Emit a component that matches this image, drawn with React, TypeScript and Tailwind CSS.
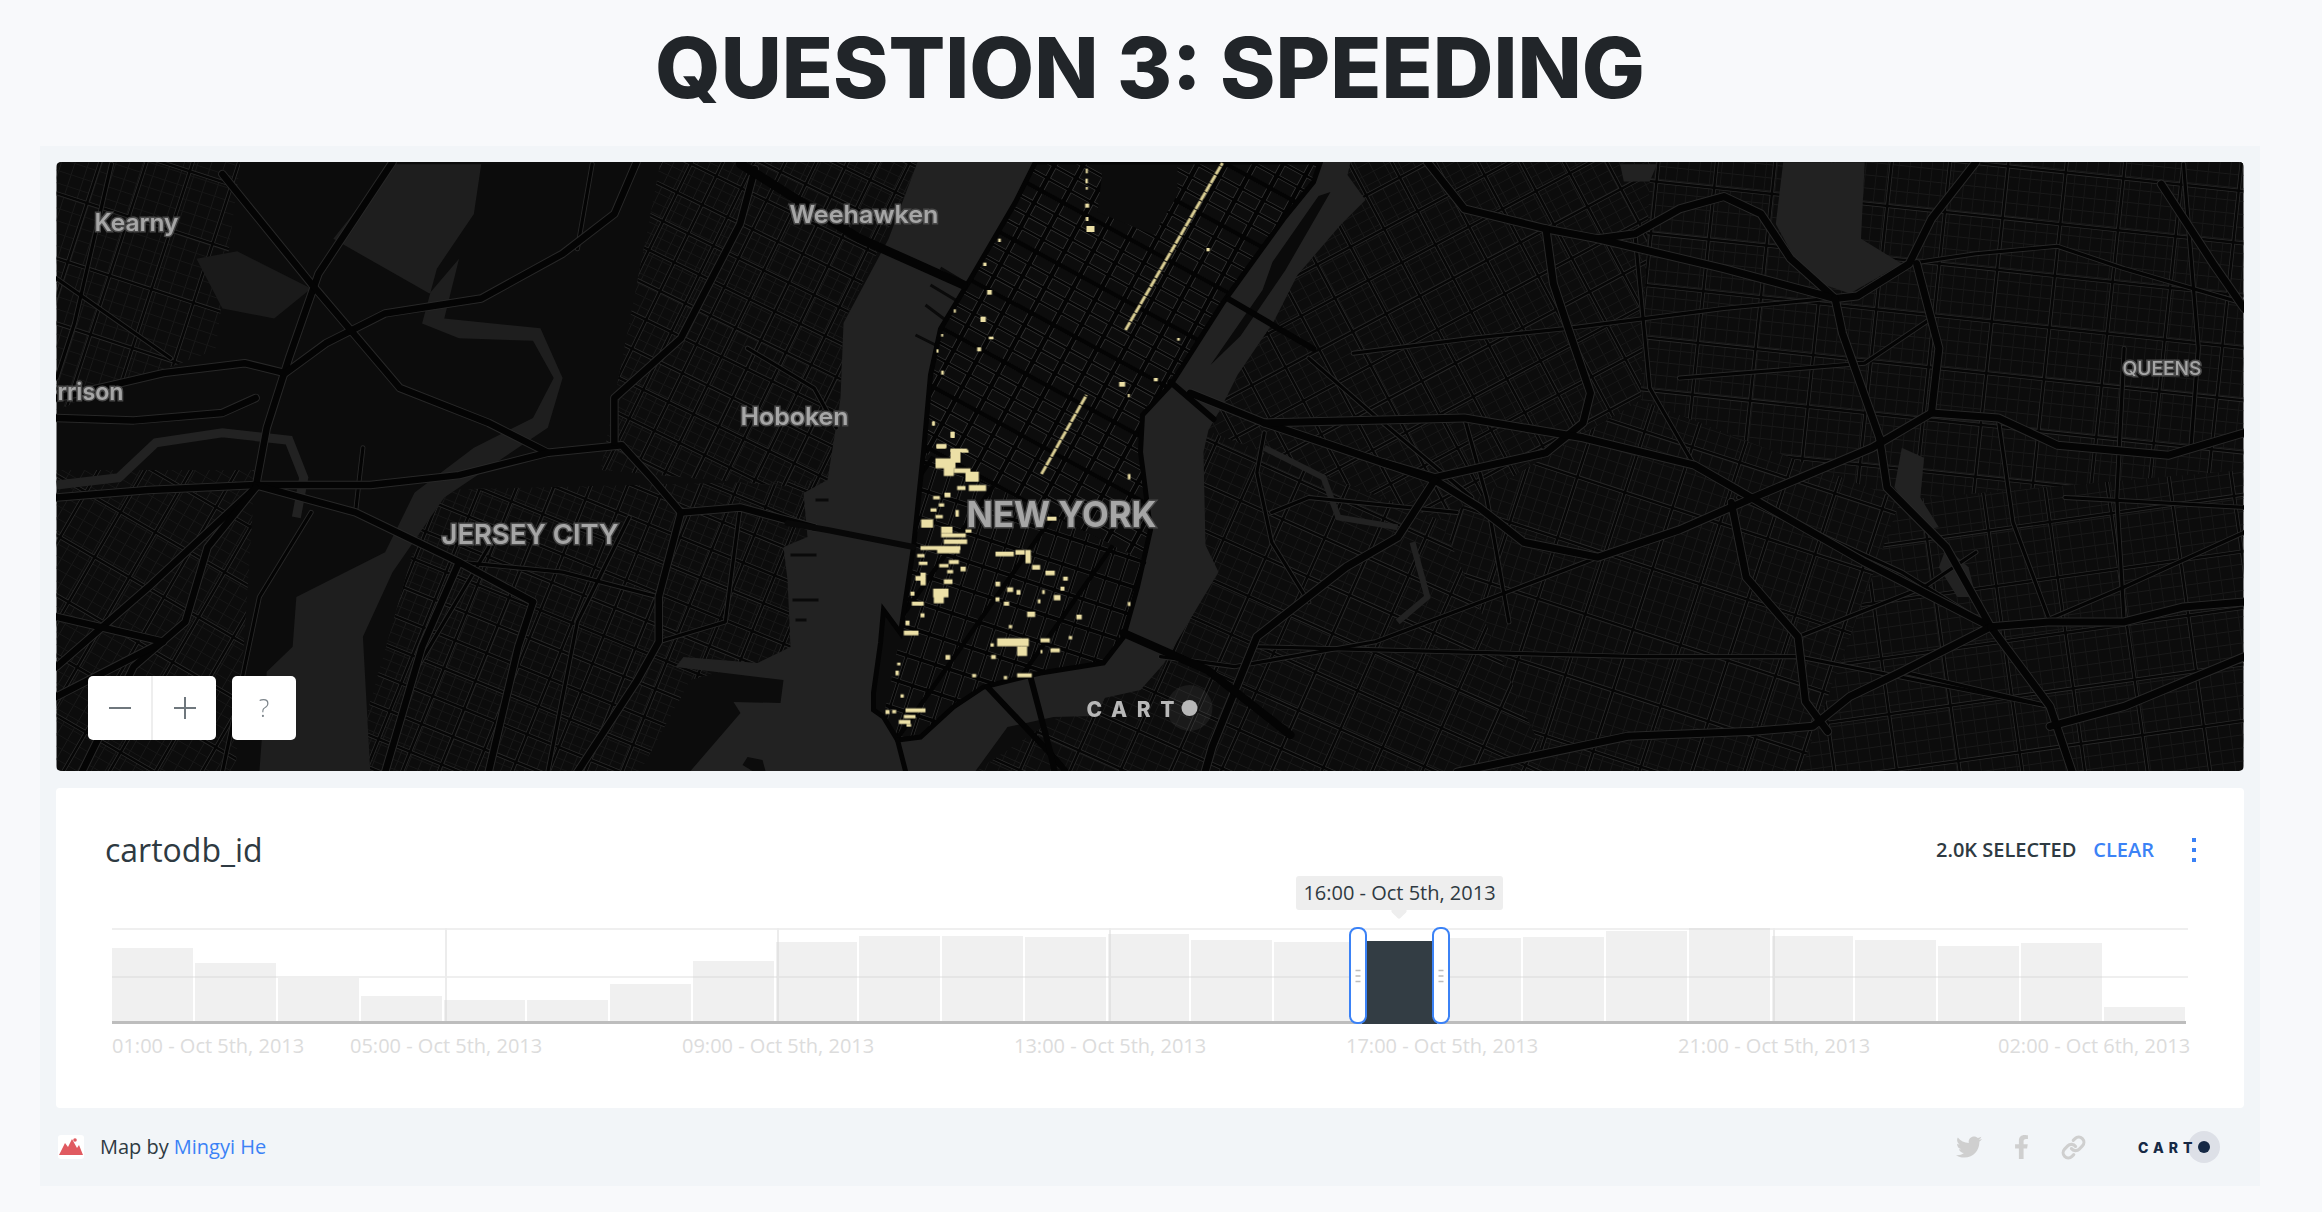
import { FaTwitter, FaFacebookF } from "react-icons/fa";
import { FiLink } from "react-icons/fi";

// rough trace of the basemap, coordinates are page pixels unless inside a z1/z2 group
const Z1 = "matrix(0.7396 0 0 0.4975 0 0)";
const Z2 = "matrix(0.7413 0 0 0.4975 1160 0)";

const MANHATTAN_EDGE =
  "1320,162 1313,182 1283,219 1223,302 1170,385 1142,415 1140,452 1142,467 1150,530 1137,587 1123,637 1103,663 1040,673 983,687 953,707 920,737 897,740 883,717 873,710 873,693 880,643 883,610 900,633 913,547 920,480 923,452 930,375 940,329 970,279 1015,202 1035,162";

const WATER = `917,162 888,239 843,323 840,398 827,480 803,493 807,537 783,547 787,580 790,647 757,663 683,657 675,667 783,680 780,703 733,702 740,713 690,771 975,771 1007,727 1053,717 1095,716 1104,698 1140,690 1163,664 1218,572 1205,545 1203,452 1208,430 1220,409 1237,375 1273,322 1297,275 1340,225 1365,200 1347,175 1350,162 ${MANHATTAN_EDGE}`;

const MIDTOWN_CLIP = "1320,162 1313,182 1283,219 1223,302 1170,385 1142,415 1140,452 1142,467 1150,530 1146,562 923,452 930,375 940,329 970,279 1015,202 1035,162";
const DOWNTOWN_CLIP = "923,452 1146,562 1137,587 1123,637 1103,663 1040,673 983,687 953,707 920,737 897,740 883,717 900,633 913,547 920,480";

type Zone = { clip: string; a: number; sa: number; b: number; sb: number; ma: number; mb: number };

const ZONES: Zone[] = [
  { clip: "56,162 240,162 215,350 56,410", a: 72, sa: 13, b: -18, sb: 12, ma: 44, mb: 62 },
  { clip: "56,470 255,470 235,771 56,771", a: 60, sa: 12, b: -30, sb: 11, ma: 40, mb: 52 },
  { clip: "430,490 830,480 800,650 690,680 640,771 350,771", a: 68, sa: 11, b: -22, sb: 9, ma: 34, mb: 30 },
  { clip: "660,162 920,162 843,323 840,398 827,490 600,470", a: 64, sa: 11, b: -26, sb: 10, ma: 28, mb: 32 },
  { clip: "1320,162 1650,162 1640,400 1440,520 1205,430", a: -62, sa: 13, b: 28, sb: 10, ma: 38, mb: 38 },
  { clip: "1650,162 2243,162 2243,470 1900,500 1640,400", a: -6, sa: 13, b: 84, sb: 11, ma: 52, mb: 58 },
  { clip: "1205,430 1440,520 1550,771 975,771 1160,650", a: -24, sa: 11, b: 66, sb: 12, ma: 42, mb: 46 },
  { clip: "1440,520 1640,400 1900,500 1800,771 1550,771", a: 72, sa: 11, b: -18, sb: 12, ma: 50, mb: 64 },
  { clip: "1900,500 2243,470 2243,771 1800,771", a: 8, sa: 13, b: 98, sb: 12, ma: 56, mb: 62 },
];

const HIGHWAYS_Z1 = [
  "M530,326 L430,550 L390,720 L360,860 L345,980 L200,1180 L76,1340",
  "M860,326 L830,430 L760,510 L650,600 L520,630 L440,690 L385,750 L330,730 L220,750 L76,800",
  "M300,350 L420,570 L540,780 L660,850 L740,910",
  "M76,1000 L200,985 L345,975 L500,975 L620,955 L740,910 L840,895 L880,960 L920,1030 L1000,1020 L1100,1060",
  "M345,975 L480,1030 L620,1130 L720,1210",
  "M1020,340 L1000,450 L920,680 L830,800 L830,890",
  "M920,1030 L890,1200 L890,1290 L860,1370 L780,1552",
  "M345,980 L280,1100 L250,1250 L180,1340 L110,1552",
  "M76,840 L180,845 L300,830 L345,800",
  "M660,1552 L700,1300 L720,1210",
  "M520,1552 L570,1300 L620,1130",
  "M76,1240 L220,1290 L76,1400",
];

const HIGHWAYS_Z2 = [
  "M360,326 L410,420 L520,460 L590,480 L640,470 L700,420 L760,395 L810,430 L850,520 L910,600 L940,595 L1010,530 L1040,440 L1100,326",
  "M590,480 L760,540 L910,600",
  "M520,460 L530,570 L550,660 L580,790 L570,850 L520,910 L370,960 L300,930 L140,850 L40,790",
  "M140,850 L410,840 L570,880 L720,935 L820,1020 L950,1130 L1120,1260 L1200,1420 L1230,1552",
  "M300,930 L370,965 L430,1020 L490,1090 L590,1120 L700,1065 L800,1000 L960,900 L1040,830 L1050,700 L1020,530",
  "M1040,830 L1130,840 L1210,895 L1360,915 L1462,870",
  "M970,880 L920,670 L910,600",
  "M970,880 L980,980 L1060,1100 L1120,1260",
  "M370,965 L320,1080 L250,1140 L130,1280 L70,1500 L60,1552",
  "M770,1010 L790,1160 L860,1280 L870,1410 L900,1470",
  "M1120,1260 L1000,1350 L930,1400 L880,1460 L800,1470 L630,1480 L400,1552",
  "M1120,1260 L1200,1250 L1300,1250 L1380,1220 L1462,1210",
  "M1200,1460 L1300,1420 L1462,1320",
  "M1350,370 L1420,530 L1462,620",
];

const ROADS_Z2 = [
  "M140,870 L130,950 L150,1090 L200,1210",
  "M590,1120 L450,1200 L290,1290 L100,1340 L0,1320",
  "M260,710 L420,680 L550,660 L760,620 L900,600",
  "M1010,530 L1100,510 L1210,495 L1300,540 L1462,610",
  "M1190,1250 L1300,1180 L1462,1070",
  "M1130,840 L1150,1050 L1200,1250",
  "M1300,700 L1290,1000 L1300,1250",
  "M640,470 L660,780 L720,935",
  "M780,1000 L1000,1150 L1120,1260",
  "M130,1300 L650,1320 L860,1320 L1200,1420",
  "M860,1280 L1030,1180 L1100,1110",
  "M400,1030 L200,1000 L150,1030",
  "M410,840 L440,1000 L470,1250",
  "M1000,1350 L1200,1420",
  "M700,760 L950,730 L1040,640",
  "M200,720 L300,850 L420,1000",
  "M1220,1000 L1462,1020",
  "M1380,330 L1400,700 L1390,900",
];

const ROADS_Z1 = [
  "M300,1552 L350,1200 L420,1030",
  "M1000,1020 L980,1250 L890,1290",
  "M620,1130 L760,1150 L890,1200",
  "M490,900 L480,1030",
  "M150,330 L100,650 L76,760",
  "M76,560 L230,720",
  "M800,330 L780,500",
  "M1010,700 L1100,780 L1130,860",
  "M850,1040 L780,1250 L740,1552",
  "M660,1100 L560,1350 L520,1552",
];

// yellow blocks, coordinates in a 3x crop anchored at (840,400)
const BLOCKS = [
  [288,132,30,12],[285,175,60,30],[330,148,30,40],[362,150,22,8],[310,200,30,28],[340,205,50,14],[375,215,40,30],[385,255,52,18],[350,258,25,12],[278,288,20,10],
  [312,278,18,14],[270,325,18,10],[295,310,16,10],[285,345,22,10],[345,330,10,20],[242,358,36,25],[302,380,34,20],[302,400,74,12],[310,418,70,14],[375,388,18,10],
  [240,438,120,12],[290,446,68,14],[230,462,22,10],[235,485,26,10],[296,492,28,10],[325,480,30,12],[360,500,16,14],[320,510,18,10],[225,528,30,14],[240,518,16,38],
  [310,538,26,14],[278,566,46,26],[280,590,30,20],[210,575,12,12],[214,605,36,12],[240,640,12,12],[195,662,12,14],[190,692,44,14],[165,812,10,14],[170,788,10,8],
  [135,930,12,12],[155,930,12,10],[195,925,60,12],[190,945,35,10],[175,960,35,12],[198,972,14,8],[180,883,10,10],[275,65,8,12],[330,95,12,18],[620,350,28,12],
  [465,455,55,14],[525,450,28,14],[555,450,16,40],[575,495,24,14],[615,512,28,14],[668,530,14,12],[465,545,14,14],[500,562,18,14],[528,570,12,14],[660,560,12,12],
  [605,570,8,12],[640,585,20,16],[465,592,12,12],[490,605,16,12],[592,598,8,12],[560,635,24,16],[708,644,16,14],[505,675,10,10],[470,715,95,24],[530,740,30,28],
  [600,715,28,12],[685,708,10,10],[450,730,10,10],[452,765,14,12],[315,765,14,14],[630,745,28,12],[600,750,6,10],[395,822,12,10],[490,828,10,10],[530,820,44,12],
  [862,222,8,16],[862,606,8,12],
];

// midtown dots, coordinates in a 3x crop anchored at (920,162)
const DOTS = [
  [496,20,6,14],[495,50,7,14],[496,75,6,8],[494,125,12,12],[496,165,8,12],[498,192,24,18],[233,230,8,10],[188,302,10,10],[200,384,14,14],[180,464,16,16],
  [205,524,14,8],[170,556,12,12],[100,442,6,10],[62,516,6,8],[48,562,6,10],[62,626,8,12],[770,528,8,8],[858,258,10,10],[596,660,18,14],[700,648,12,10],[622,696,6,10],[36,778,6,12],[92,810,10,18],[48,848,28,12],[90,860,50,10],
];

const BAR_TOPS = [948,963,978,996,1000,1000,984,961,942,936,936,937,934,940,942,941,938,937,931,928,936,940,946,943,1007];
const TICKS = [446,778,1110,1442,1774];

function grid(cx: number, cy: number, angle: number, spacing: number, extent = 1700) {
  const r = (angle * Math.PI) / 180;
  const dx = Math.cos(r);
  const dy = -Math.sin(r);
  let d = "";
  for (let t = -extent; t <= extent; t += spacing) {
    const x = cx - dy * t;
    const y = cy + dx * t;
    d += `M${(x - dx * extent).toFixed(1)},${(y - dy * extent).toFixed(1)}L${(x + dx * extent).toFixed(1)},${(y + dy * extent).toFixed(1)}`;
  }
  return d;
}

function Label(props: { x: number; y: number; w: number; size: number; text: string; weight?: number }) {
  return (
    <text
      x={props.x}
      y={props.y}
      fontSize={props.size}
      fontWeight={props.weight ?? 600}
      textLength={props.w}
      lengthAdjust="spacingAndGlyphs"
      fill="#a6a6a6"
      stroke="#484848"
      strokeWidth={3}
      className="font-['Inter',sans-serif] [paint-order:stroke]"
    >
      {props.text}
    </text>
  );
}

function CasedRoads({ paths, width, casing }: { paths: string[]; width: number; casing: number }) {
  return (
    <>
      {paths.map((d) => (
        <path key={d} d={d} stroke="#282828" strokeWidth={casing} vectorEffect="non-scaling-stroke" />
      ))}
      {paths.map((d) => (
        <path key={d} d={d} stroke="#040404" strokeWidth={width} vectorEffect="non-scaling-stroke" />
      ))}
    </>
  );
}

function MapDrawing() {
  return (
    <svg viewBox="56 162 2187 609" className="block h-full w-full">
      <defs>
        {ZONES.map((z, i) => (
          <clipPath key={i} id={`zone-${i}`}>
            <polygon points={z.clip} />
          </clipPath>
        ))}
        <clipPath id="midtown">
          <polygon points={MIDTOWN_CLIP} />
        </clipPath>
        <clipPath id="downtown">
          <polygon points={DOWNTOWN_CLIP} />
        </clipPath>
      </defs>

      <rect x="56" y="162" width="2187" height="609" fill="#0c0c0c" />

      {ZONES.map((z, i) => (
        <g key={i} clipPath={`url(#zone-${i})`} fill="none">
          <path d={grid(1000, 460, z.a, z.sa)} stroke="#1a1a1a" strokeWidth="1" />
          <path d={grid(1000, 460, z.b, z.sb)} stroke="#171717" strokeWidth="1" />
          <path d={grid(1003, 463, z.a, z.ma)} stroke="#292929" strokeWidth="4" />
          <path d={grid(1003, 463, z.b, z.mb)} stroke="#292929" strokeWidth="4" />
          <path d={grid(1003, 463, z.a, z.ma)} stroke="#060606" strokeWidth="2.4" />
          <path d={grid(1003, 463, z.b, z.mb)} stroke="#060606" strokeWidth="2.4" />
        </g>
      ))}

      {/* meadowlands and newark bay */}
      <g transform={Z1}>
        <path d="M530,330 L650,330 L640,430 L590,540 L570,650 L620,680 L720,685 L748,760 L720,840 L640,900 L560,990 L540,1050 L520,1110 L400,1200 L395,1300 L360,1350 L350,1552 L500,1552 L490,1280 L530,1150 L600,1000 L740,860 L760,760 L730,660 L600,640 L620,520 L580,590 L450,480 Z" fill="#1e1e1e" />
        <path d="M265,520 L320,505 L420,580 L370,640 L300,620 Z" fill="#1a1a1a" />
        <path d="M76,975 L160,960 L210,890 L300,870 L390,885 L410,960 L400,1040" stroke="#222222" strokeWidth="9" fill="none" vectorEffect="non-scaling-stroke" />
      </g>

      <g transform={Z2}>
        <path d="M840,326 L950,326 L945,480 L1000,530 L930,590 L870,560 L830,450 Z" fill="#222222" />
        <path d="M620,330 L670,330 L660,365 L625,365 Z" fill="#222222" />
        <path d="M1000,900 L1030,920 L1025,1000 L1050,1060 L1030,1065 L990,980 Z" fill="#222222" />
        <path d="M1060,1100 L1090,1140 L1100,1200 L1075,1200 L1050,1140 Z" fill="#222222" />
        <path d="M140,900 L220,960 L240,1040 L320,1060 M340,1090 L360,1200 L320,1250" stroke="#222222" strokeWidth="6" fill="none" vectorEffect="non-scaling-stroke" />
      </g>

      <polygon points={WATER} fill="#222222" />

      {/* piers and roosevelt island */}
      <path d="M1330,192 L1318,196 L1272,262 L1262,290 L1210,365 L1240,336 L1285,270 Z" fill="#0a0a0a" />
      <polygon points="747,757 742,765 752,771 765,771 762,760" fill="#0c0c0c" />
      <path d="M828,500 H815 M816,555 H790 M818,600 H792 M806,620 H795" stroke="#0a0a0a" strokeWidth="3" fill="none" />
      <path d="M965,283 L940,268 M955,300 L930,285 M945,320 L925,305 M935,345 L915,335" stroke="#0a0a0a" strokeWidth="3" fill="none" />

      {/* manhattan */}
      <polygon points={MANHATTAN_EDGE} fill="#0c0c0c" />
      <g clipPath="url(#midtown)" fill="none">
        <path d={grid(1040, 400, -28.6, 14, 800)} stroke="#343434" strokeWidth="3.8" />
        <path d={grid(1040, 400, 61.4, 25, 800)} stroke="#343434" strokeWidth="6" />
        <path d={grid(1040, 400, -28.6, 14, 800)} stroke="#040404" strokeWidth="2.4" />
        <path d={grid(1040, 400, 61.4, 25, 800)} stroke="#040404" strokeWidth="4.4" />
        <path d={grid(1040, 400, -28.6, 56, 800)} stroke="#040404" strokeWidth="4.4" />
      </g>
      <g clipPath="url(#downtown)" fill="none">
        <path d={grid(1040, 600, 72, 15, 500)} stroke="#2e2e2e" strokeWidth="3.4" />
        <path d={grid(1040, 600, -18, 27, 500)} stroke="#2e2e2e" strokeWidth="5" />
        <path d={grid(1040, 600, 72, 15, 500)} stroke="#040404" strokeWidth="2" />
        <path d={grid(1040, 600, -18, 27, 500)} stroke="#040404" strokeWidth="3.6" />
        <path d={grid(1040, 600, 55, 66, 500)} stroke="#040404" strokeWidth="4.4" />
      </g>
      <polygon points="1103,162 1177,162 1177,195 1153,235 1097,212" fill="#0c0c0c" />
      <polygon points={MANHATTAN_EDGE} stroke="#040404" strokeWidth="5" fill="none" />

      <g fill="none" strokeLinecap="round" strokeLinejoin="round">
        <g transform={Z1}>
          <CasedRoads paths={ROADS_Z1} width={3.2} casing={5} />
          <CasedRoads paths={HIGHWAYS_Z1} width={6.5} casing={8.5} />
        </g>
        <g transform={Z2}>
          <CasedRoads paths={ROADS_Z2} width={3.2} casing={5} />
          <CasedRoads paths={HIGHWAYS_Z2} width={7} casing={9} />
        </g>
        {/* tunnels and bridges */}
        <path d="M740,164 L858,238 L963,285" stroke="#040404" strokeWidth="9" />
        <path d="M787,523 L827,530 L913,547" stroke="#080808" strokeWidth="6" />
        <path d="M1228,299 L1313,349" stroke="#040404" strokeWidth="6" />
        <path d="M1170,382 L1213,419" stroke="#040404" strokeWidth="6" />
        <path d="M1123,633 L1207,670 L1290,735" stroke="#040404" strokeWidth="8" />
        <path d="M987,687 L1053,757 L1065,771" stroke="#040404" strokeWidth="6" />
        <path d="M1030,677 L1050,753 L1054,771" stroke="#040404" strokeWidth="6" />
        <path d="M897,740 L905,771" stroke="#040404" strokeWidth="5" />
      </g>

      {/* selected points */}
      <g className="blur-[0.5px]">
        <path d="M1125,330 L1222,163" stroke="#d8cc92" strokeWidth="3" strokeDasharray="9 1" fill="none" />
        <path d="M1041,474 L1086,395" stroke="#d8cc92" strokeWidth="3" strokeDasharray="9 1" fill="none" />
        <g fill="#ece0a6">
          <g transform="translate(920 162) scale(0.3333)">
            {DOTS.map((b, i) => (
              <rect key={i} x={b[0]} y={b[1]} width={b[2]} height={b[3]} />
            ))}
          </g>
          <g transform="translate(840 400) scale(0.3333)">
            {BLOCKS.map((b, i) => (
              <rect key={i} x={b[0]} y={b[1]} width={b[2]} height={b[3]} />
            ))}
          </g>
        </g>
      </g>

      <Label x={94} y={231} w={84} size={24} text="Kearny" />
      <Label x={789} y={223} w={149} size={24} text="Weehawken" />
      <Label x={57} y={400} w={66} size={24} text="rrison" />
      <Label x={740} y={425} w={108} size={24} text="Hoboken" />
      <Label x={441} y={544} w={177} size={27} text="JERSEY CITY" />
      <Label x={966} y={527} w={190} size={35} text="NEW YORK" weight={700} />
      <Label x={2122} y={375} w={79} size={18} text="QUEENS" weight={500} />

      {/* carto watermark */}
      <circle cx="1189" cy="708" r="23" fill="#ffffff" fillOpacity="0.06" />
      <text x="1086" y="717" fontSize="21" fontWeight="800" textLength="88" fill="#b8b8b8" className="font-['Inter',sans-serif]">
        CART
      </text>
      <circle cx="1189" cy="708" r="8" fill="#b8b8b8" />
    </svg>
  );
}

function Histogram() {
  return (
    <svg viewBox="110 925 2082 102" className="block h-[102px] w-[2082px]">
      <path d="M112,929 H2188 M112,977 H2188" stroke="#efefef" strokeWidth="2" />
      {TICKS.map((x) => (
        <path key={x} d={`M${x},928 V1022`} stroke="#ececec" strokeWidth="2" />
      ))}
      {BAR_TOPS.map((top, i) =>
        i === 15 ? null : (
          <rect key={i} x={112 + i * 83} y={top} width={81} height={1024 - top} fill="#cfcfcf" fillOpacity={0.32} />
        )
      )}
      <path d="M112,1022.5 H2186" stroke="#bdbdbd" strokeWidth="3" />
      <rect x="1362" y="941" width="75" height="83" fill="#333d44" />
      <rect x="1350" y="928" width="16" height="95" rx="7" fill="#ffffff" stroke="#3b82f6" strokeWidth="2" />
      <rect x="1433" y="928" width="16" height="95" rx="7" fill="#ffffff" stroke="#3b82f6" strokeWidth="2" />
      <path d="M1355.5,970.5 h5 M1355.5,976 h5 M1355.5,981.5 h5 M1438.5,970.5 h5 M1438.5,976 h5 M1438.5,981.5 h5" stroke="#bcbcbc" strokeWidth="1.5" />
    </svg>
  );
}

export default function App() {
  return (
    <div className="min-h-screen w-full bg-[#f8f9fb] font-['Open_Sans',sans-serif] text-[#2e3a42]">
      <h1 className="flex h-[146px] items-center justify-center pr-[22px] pb-[10px] font-['Inter',sans-serif] text-[84px] leading-none font-extrabold text-[#212529]">
        QUESTION 3: SPEEDING
      </h1>

      <div className="ml-[40px] w-[2220px] bg-[#f2f5f8] px-[16px] pt-[16px]">
        <div className="h-[609px] overflow-hidden rounded-[5px]">
          <div className="relative h-full">
            <MapDrawing />
            <div className="absolute top-[514px] left-[32px] flex gap-[16px]">
              <div className="flex h-[64px] w-[128px] rounded-[5px] bg-white">
                <div className="flex w-[65px] items-center justify-center border-r-2 border-[#eeeeee]">
                  <div className="h-[2px] w-[22px] bg-[#6f777d]" />
                </div>
                <div className="relative flex flex-1 items-center justify-center">
                  <div className="h-[2px] w-[22px] bg-[#6f777d]" />
                  <div className="absolute h-[22px] w-[2px] bg-[#6f777d]" />
                </div>
              </div>
              <div className="flex h-[64px] w-[64px] items-center justify-center rounded-[5px] bg-white text-[25px] font-light text-[#7c848a]">
                ?
              </div>
            </div>
          </div>
        </div>

        <div className="mt-[17px] h-[320px] rounded-[4px] bg-white">
          <div className="flex h-[52px] translate-y-[36px] items-center justify-between pr-[48px] pl-[49px]">
            <span className="text-[32px] leading-none">cartodb_id</span>
            <div className="flex items-center text-[20px]">
              <span className="font-semibold">2.0K SELECTED</span>
              <span className="ml-[17px] font-semibold text-[#3b82f6]">CLEAR</span>
              <div className="ml-[38px] flex h-[24px] w-[4px] flex-col justify-between">
                <div className="h-[4px] bg-[#3b82f6]" />
                <div className="h-[4px] bg-[#3b82f6]" />
                <div className="h-[4px] bg-[#3b82f6]" />
              </div>
            </div>
          </div>

          <div className="relative mt-[85px] ml-[54px]">
            <Histogram />
            <div className="absolute top-[-49px] left-[1186px] flex h-[34px] w-[207px] items-center justify-center rounded-[3px] bg-[#eeeeee] text-[20px] font-medium whitespace-nowrap">
              16:00 - Oct 5th, 2013
              <div className="absolute top-[29px] left-[97px] h-[12px] w-[12px] rotate-45 rounded-[2px] bg-[#eeeeee]" />
            </div>
          </div>

          <div className="mt-[7px] ml-[56px] flex text-[20px] leading-[24px] whitespace-nowrap text-[#dcdcdc]">
            <span className="w-[192px]">01:00 - Oct 5th, 2013</span>
            <span className="ml-[46px] w-[192px]">05:00 - Oct 5th, 2013</span>
            <span className="ml-[140px] w-[192px]">09:00 - Oct 5th, 2013</span>
            <span className="ml-[140px] w-[192px]">13:00 - Oct 5th, 2013</span>
            <span className="ml-[140px] w-[192px]">17:00 - Oct 5th, 2013</span>
            <span className="ml-[140px] w-[192px]">21:00 - Oct 5th, 2013</span>
            <span className="ml-[128px] w-[192px]">02:00 - Oct 6th, 2013</span>
          </div>
        </div>

        <div className="flex h-[78px] items-center justify-between pr-[24px] pl-[2px]">
          <div className="flex items-center text-[20px]">
            <div className="flex h-[24px] w-[26px] items-center justify-center rounded-[3px] bg-white">
              <svg viewBox="0 0 26 24" className="h-[24px] w-[26px]">
                <path d="M1,20 L7,8 L10,12 L14,4 L19,13 L21,10 L25,20 Z" fill="#e05a60" />
                <circle cx="17" cy="5" r="1.8" fill="#e05a60" />
              </svg>
            </div>
            <span className="ml-[16px]">Map by</span>
            <span className="ml-[5px] text-[#3b82f6]">Mingyi He</span>
          </div>
          <div className="flex items-center text-[#cfcfcf]">
            <FaTwitter className="h-[26px] w-[26px]" />
            <FaFacebookF className="ml-[30px] h-[24px] w-[19px]" />
            <FiLink className="ml-[30px] h-[25px] w-[25px]" strokeWidth={3} />
            <div className="relative ml-[52px] flex h-[32px] w-[82px] items-center">
              <div className="absolute top-0 left-[50px] h-[32px] w-[32px] rounded-full bg-[#dde0e7]" />
              <span className="relative font-['Inter',sans-serif] text-[14px] font-extrabold tracking-[5px] text-[#162945]">CART</span>
              <div className="absolute top-[10px] left-[60px] h-[12px] w-[12px] rounded-full bg-[#162945]" />
            </div>
          </div>
        </div>
      </div>
    </div>
  );
}
